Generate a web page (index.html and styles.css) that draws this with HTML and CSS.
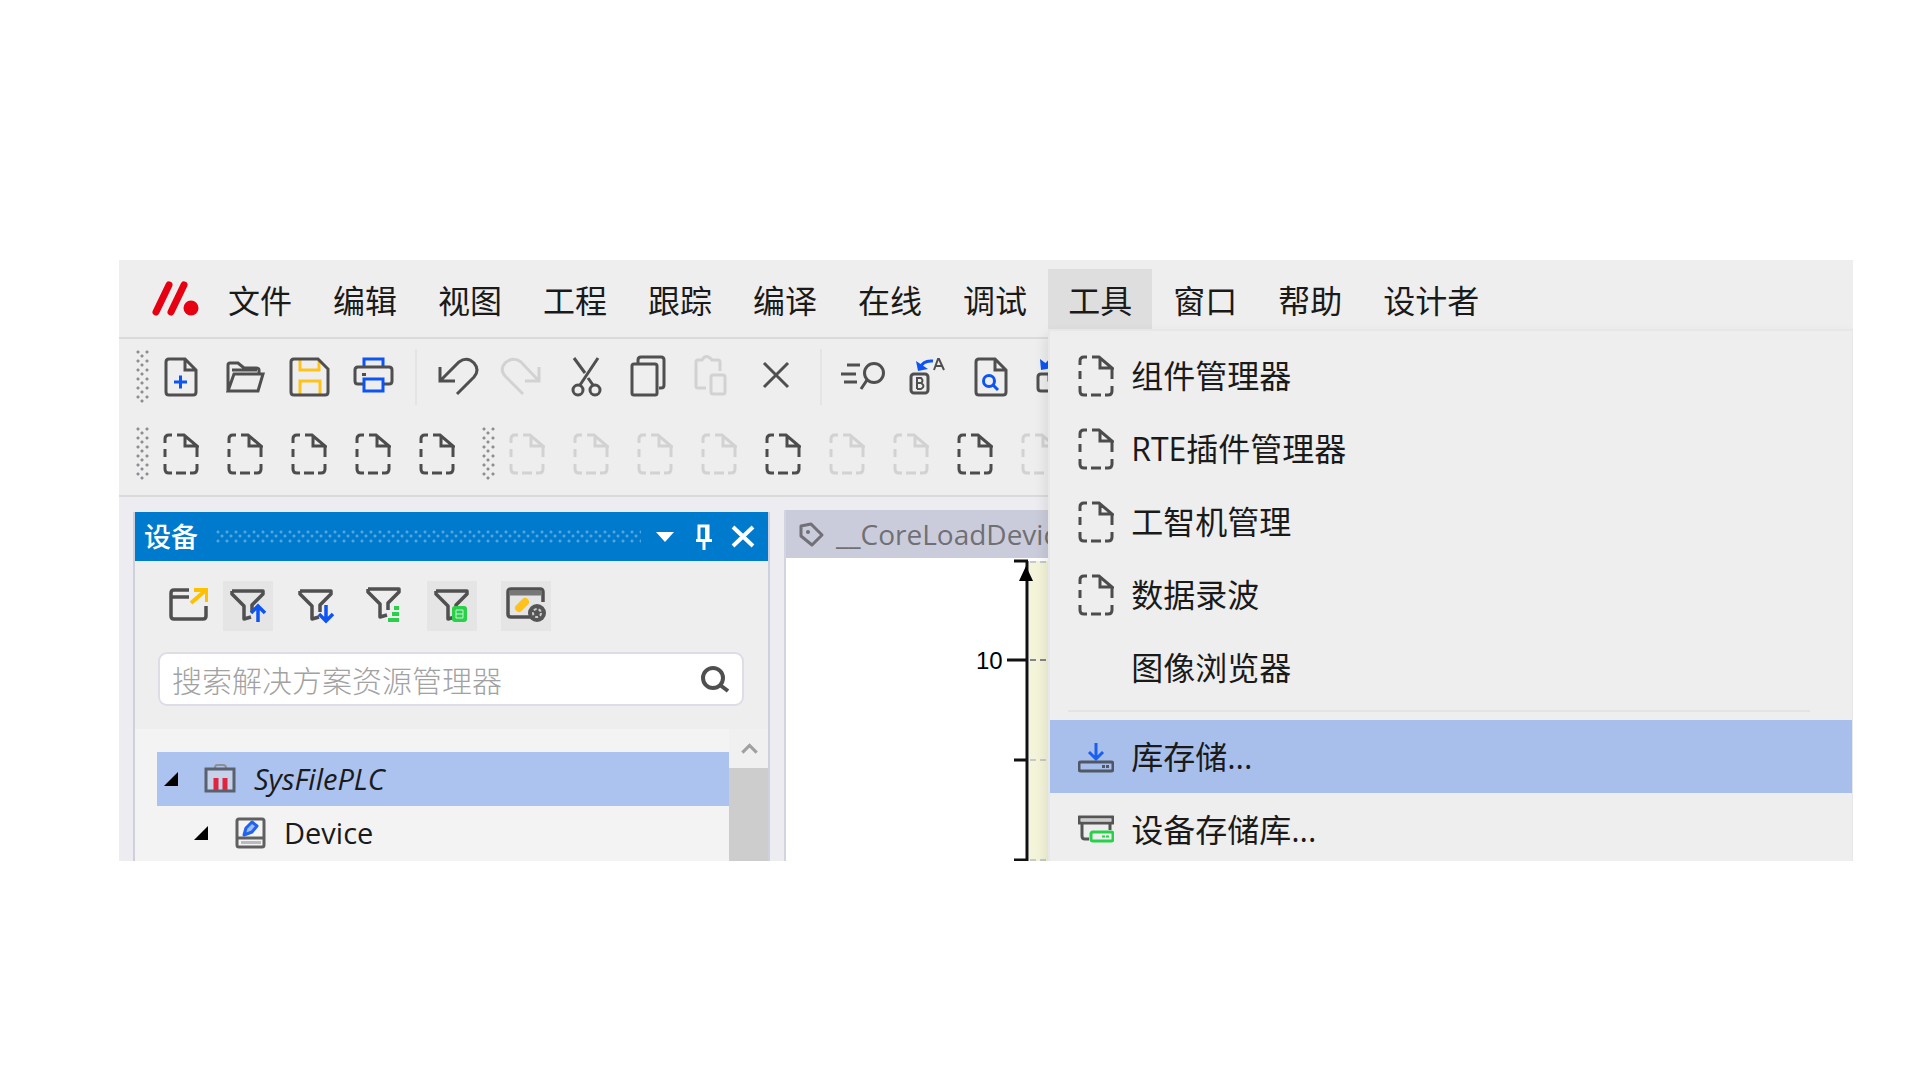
FILE: index.html
```html
<!DOCTYPE html>
<html lang="zh-CN">
<head>
<meta charset="utf-8">
<title>SysFilePLC</title>
<link rel="stylesheet" href="styles.css">
</head>
<body>
<svg class="sprite" aria-hidden="true">
  <symbol id="file" viewBox="0 0 36 42">
    <path d="M2 10V6Q2 2 6 2H9M14 2H21L34 13H22V3M34 14V24M2 16V24M2 31V36Q2 40 6 40H9M13 40H23M27 40H30Q34 40 34 36V31" fill="none" stroke="currentColor" stroke-width="3"/>
  </symbol>
  <symbol id="funnel" viewBox="0 0 50 50">
    <path d="M9 10H40V13L29 24V31M9 10V13L21 25V38L28 36" fill="none" stroke="#505050" stroke-width="3.500" stroke-linejoin="round"/>
  </symbol>
</svg>

<main class="window">
  <nav class="menubar">
    <svg class="logo" viewBox="0 0 60 60" role="img" aria-label="logo"><path d="M8 43 21 16M23 43 36 16" stroke="#e60012" stroke-width="7" stroke-linecap="round"/><circle cx="43" cy="39" r="7.500" fill="#e60012"/></svg>
    <ul class="menus">
      <li><button>文件</button></li>
      <li><button>编辑</button></li>
      <li><button>视图</button></li>
      <li><button>工程</button></li>
      <li><button>跟踪</button></li>
      <li><button>编译</button></li>
      <li><button>在线</button></li>
      <li><button>调试</button></li>
      <li class="open"><button>工具</button>
        <ul class="popup">
          <li><button><svg class="file"><use href="#file"/></svg>组件管理器</button></li>
          <li><button><svg class="file"><use href="#file"/></svg>RTE插件管理器</button></li>
          <li><button><svg class="file"><use href="#file"/></svg>工智机管理</button></li>
          <li><button><svg class="file"><use href="#file"/></svg>数据录波</button></li>
          <li><button><span class="file"></span>图像浏览器</button></li>
          <li class="separator"></li>
          <li class="selected"><button><svg class="file" viewBox="0 0 36 42"><rect x="1" y="26" width="34" height="9" rx="2" fill="none" stroke="#505866" stroke-width="3"/><path d="M24 30.500H31" stroke="#505866" stroke-width="3" stroke-dasharray="3 1"/><path d="M18 7V22M11 16 18 23 25 16" fill="none" stroke="#1a5ff0" stroke-width="3"/></svg>库存储...</button></li>
          <li><button><svg class="file" viewBox="0 0 36 42"><path d="M1 8H35V14H1ZM4 14V27Q4 30 7 30H11M32 14V21" fill="none" stroke="#555" stroke-width="3" stroke-linejoin="round"/><path d="M3 11H33" stroke="#ccc" stroke-width="3"/><rect x="13" y="23" width="22" height="9" rx="2" fill="#eee" stroke="#28d148" stroke-width="3"/><path d="M24 27.500H32" stroke="#28d148" stroke-width="2" stroke-dasharray="3 1"/></svg>设备存储库...</button></li>
        </ul>
      </li>
      <li><button>窗口</button></li>
      <li><button>帮助</button></li>
      <li><button>设计者</button></li>
    </ul>
  </nav>

  <div class="toolbars">
    <div class="toolbar">
      <span class="grip"></span>
      <button aria-label="新建"><svg viewBox="0 0 64 64"><path d="M20 14H36L47 25V47Q47 50 44 50H20Q17 50 17 47V17Q17 14 20 14ZM36 14V25H47" /><path class="blue" d="M25 37H38M31.500 30.500V43.500"/></svg></button>
      <button aria-label="打开"><svg viewBox="0 0 64 64"><path d="M15 46V20Q15 18 17 18H25L31 23H43Q46 23 46 25V29M15 46 21 29H50L45 46ZM19 25H44" stroke-width="3"/></svg></button>
      <button aria-label="保存"><svg viewBox="0 0 64 64"><path class="amber" d="M23 15V25H42V15M23 49V36H43V49"/><path d="M17 14H41L51 24V47Q51 50 48 50H17Q14 50 14 47V17Q14 14 17 14Z"/></svg></button>
      <button aria-label="打印"><svg viewBox="0 0 64 64"><path class="blue" d="M23 22V14H42V22"/><path d="M23 39H17Q14 39 14 36V25Q14 22 17 22H48Q51 22 51 25V36Q51 39 48 39H42M21 29.500H25"/><path class="blue" d="M23 34H42V46H23Z"/></svg></button>
      <span class="rule"></span>
      <button aria-label="撤销"><svg viewBox="0 0 64 64"><path d="M14 22V36H29M15 35 33 17Q41 11 48 18Q54 25 48 32L31 49"/></svg></button>
      <button aria-label="重做" disabled><svg viewBox="0 0 64 64"><path d="M49 22V36H35M48 35 31 17Q23 11 15 18Q9 25 16 32L33 49"/></svg></button>
      <button aria-label="剪切"><svg viewBox="0 0 64 64"><path d="M20 13 31 28M44 13 26 40M34 33 39 40"/><circle cx="24" cy="45" r="5"/><circle cx="41" cy="45" r="5"/></svg></button>
      <button aria-label="复制"><svg viewBox="0 0 64 64"><path d="M16 19H37Q39 19 39 21V48Q39 50 37 50H16Q14 50 14 48V21Q14 19 16 19ZM20 18V15Q20 12 23 12H43Q46 12 46 15V40Q46 43 43 43H41"/></svg></button>
      <button aria-label="粘贴" disabled><svg viewBox="0 0 64 64"><path d="M24 43H16Q14 43 14 41V17Q14 15 16 15H20Q24 8 30 15H36Q38 15 38 17V26M31 30H41Q43 30 43 32V47Q43 49 41 49H31Q29 49 29 47V32Q29 30 31 30Z"/></svg></button>
      <button aria-label="删除"><svg viewBox="0 0 64 64"><path d="M18 18 42 42M42 18 18 42"/></svg></button>
      <span class="rule"></span>
      <button aria-label="查找"><svg viewBox="0 0 64 64"><path d="M16 20H29M10 29H25M13 37H26M36 35 30 44"/><circle cx="43" cy="28" r="9.500"/></svg></button>
      <button aria-label="替换"><svg viewBox="0 0 64 64"><rect x="16" y="29" width="17" height="19" rx="3"/><path d="M22 44V33H26Q29 36 26 38H22M26 38Q31 41 26 44H22" stroke-width="2"/><path class="blue" d="M38 16Q28 15 25 23"/><path class="bluefill" d="M21 16 23 26 33 24Z"/><path d="M39 25 43 14H44L49 25M41 21H47" stroke-width="2"/></svg></button>
      <button aria-label="在文件中查找"><svg viewBox="0 0 64 64"><path d="M20 14H36L47 25V47Q47 50 44 50H20Q17 50 17 47V17Q17 14 20 14ZM36 14V25H47"/><circle class="blue" cx="30" cy="36" r="5.500"/><path class="blue" d="M34 40 39 45"/></svg></button>
      <button aria-label="在文件中替换"><svg viewBox="0 0 64 64"><path d="M28 29H18Q15 29 15 32V43Q15 46 18 46H32M26 29V35H32"/><path class="blue" d="M30 12 22 21"/><path class="bluefill" d="M17 14 18 25 29 23Z"/></svg></button>
    </div>
    <div class="toolbar">
      <span class="grip"></span>
      <button aria-label="命令 1"><svg class="file"><use href="#file"/></svg></button>
      <button aria-label="命令 2"><svg class="file"><use href="#file"/></svg></button>
      <button aria-label="命令 3"><svg class="file"><use href="#file"/></svg></button>
      <button aria-label="命令 4"><svg class="file"><use href="#file"/></svg></button>
      <button aria-label="命令 5"><svg class="file"><use href="#file"/></svg></button>
      <span class="grip next"></span>
      <button aria-label="命令 6" disabled><svg class="file"><use href="#file"/></svg></button>
      <button aria-label="命令 7" disabled><svg class="file"><use href="#file"/></svg></button>
      <button aria-label="命令 8" disabled><svg class="file"><use href="#file"/></svg></button>
      <button aria-label="命令 9" disabled><svg class="file"><use href="#file"/></svg></button>
      <button aria-label="命令 10"><svg class="file"><use href="#file"/></svg></button>
      <button aria-label="命令 11" disabled><svg class="file"><use href="#file"/></svg></button>
      <button aria-label="命令 12" disabled><svg class="file"><use href="#file"/></svg></button>
      <button aria-label="命令 13"><svg class="file"><use href="#file"/></svg></button>
      <button aria-label="命令 14" disabled><svg class="file"><use href="#file"/></svg></button>
    </div>
  </div>

  <div class="workspace">
    <section class="panel">
      <header class="caption">
        <h2>设备</h2>
        <span class="dots"></span>
        <button aria-label="菜单"><svg viewBox="0 0 30 30"><path d="M6 10H24L15 20Z" fill="#fff"/></svg></button>
        <button aria-label="固定"><svg viewBox="0 0 30 30"><path d="M10 18V4H19V18M7 18.500H23M15 19V28" fill="none" stroke="#fff" stroke-width="3"/><path d="M18 3V18" stroke="#fff" stroke-width="4"/></svg></button>
        <button aria-label="关闭"><svg viewBox="0 0 30 30"><path d="M5 5 25 24M25 5 5 24" stroke="#fff" stroke-width="4"/></svg></button>
      </header>
      <div class="filters">
        <button class="first" aria-label="弹出"><svg viewBox="0 0 50 50"><path d="M24 9H9Q6 9 6 12V35Q6 38 9 38H38Q41 38 41 35V25M6 16H24" fill="none" stroke="#505050" stroke-width="3.500"/><path d="M26 22 41 9M29 9H42V21" fill="none" stroke="#ffc000" stroke-width="4"/></svg></button>
        <button class="on" aria-label="向上筛选"><svg viewBox="0 0 50 50"><use href="#funnel"/><path d="M35 41V26M28 32 35 25 42 32" fill="none" stroke="#0d55f2" stroke-width="3.500"/></svg></button>
        <button aria-label="向下筛选"><svg viewBox="0 0 50 50"><use href="#funnel"/><path d="M35 24V39M28 33 35 40 42 33" fill="none" stroke="#0d55f2" stroke-width="3.500"/></svg></button>
        <button aria-label="列表筛选"><svg viewBox="0 0 50 50"><use href="#funnel" y="-2"/><path d="M35 27H40M33 33H40M29 39H40" stroke="#28d148" stroke-width="4"/></svg></button>
        <button class="on" aria-label="设备筛选"><svg viewBox="0 0 50 50"><use href="#funnel"/><rect x="25" y="25" width="15" height="16" rx="3" fill="#28d148"/><path d="M29 29H36V37H29ZM29 33H36" fill="none" stroke="#c8f5d0" stroke-width="1"/></svg></button>
        <button class="on last" aria-label="视图设置"><svg viewBox="0 0 50 50"><path d="M31 36H10Q7 36 7 33V11Q7 8 10 8H39Q42 8 42 11V21" fill="none" stroke="#505050" stroke-width="3.500"/><path d="M8 12H41" stroke="#777" stroke-width="5"/><path d="M18 27 24 21" stroke="#ffc21a" stroke-width="8" stroke-linecap="round"/><circle cx="36" cy="32" r="9" fill="#555"/><circle cx="36" cy="32" r="4" fill="none" stroke="#ccc" stroke-width="2" stroke-dasharray="3 2"/></svg></button>
      </div>
      <label class="search">
        <input type="text" placeholder="搜索解决方案资源管理器" aria-label="搜索解决方案资源管理器">
        <svg viewBox="0 0 30 30"><circle cx="13" cy="14" r="10"/><path d="M20 21 28 27"/></svg>
      </label>
      <div class="tree">
        <ul>
          <li class="selected"><svg class="twist" viewBox="0 0 14 14"><path d="M14 0V14H0Z"/></svg><svg class="node" viewBox="0 0 32 32"><path d="M11 5Q11 2 13 2H19Q22 2 22 5" fill="none" stroke="#8f8f96" stroke-width="2"/><rect x="2" y="6" width="28" height="22" fill="#c6d1ea" stroke="#59616f" stroke-width="3"/><path d="M12 15V27M21 15V27" stroke="#e0243c" stroke-width="5"/></svg><em>SysFilePLC</em></li>
          <li class="child"><svg class="twist" viewBox="0 0 14 14"><path d="M14 0V14H0Z"/></svg><svg class="node" viewBox="0 0 32 32"><rect x="3" y="2" width="27" height="28" rx="2" fill="#f4f4f4" stroke="#606060" stroke-width="3"/><path d="M3 21H30" stroke="#606060" stroke-width="3"/><path d="M7 25.500H27" stroke="#bbb" stroke-width="3"/><path d="M10 18 12 11 18 5 23 9 18 15Z" fill="#9fbcf8" stroke="#1f63ef" stroke-width="3" stroke-linejoin="round"/></svg><span>Device</span></li>
        </ul>
        <div class="scrollbar"><svg viewBox="0 0 38 38"><path d="M13 23 20 16 27 23" fill="none" stroke="#a0a0a0" stroke-width="3"/></svg><span class="thumb"></span></div>
      </div>
    </section>

    <section class="editor">
      <header class="tab"><svg viewBox="0 0 30 30"><path d="M5 7 15 5 26 16 16 26 5 17Z" fill="none" stroke="#707076" stroke-width="3" stroke-linejoin="round"/><circle cx="12" cy="13" r="2" fill="#707076"/></svg><span>__CoreLoadDevice</span></header>
      <div class="canvas">
        <svg viewBox="0 0 300 303" width="300" height="303" class="trace">
          <path d="M243 3H300V303H243Z" fill="#f4f4da"/>
          <path d="M244 4H300M244 202H300M244 302H300" stroke="#c9c9c9" stroke-width="2" stroke-dasharray="6 4"/>
          <path d="M244 102H300" stroke="#858585" stroke-width="2" stroke-dasharray="6 4"/>
          <path d="M241 3V303" stroke="#111" stroke-width="3"/>
          <path d="M228 3H242M221 102H241M228 202H241M228 302H242" stroke="#111" stroke-width="3"/>
          <path d="M240 8 247 23H233Z"/>
          <text x="190" y="111">10</text>
        </svg>
      </div>
    </section>
  </div>
</main>
</body>
</html>
```
FILE: styles.css
```css
* { box-sizing: border-box; }
body {
  margin: 0;
  padding: 260px 67px 0 119px;
  background: #fff;
  color: #1a1a1a;
  font-family: "Open Sans", "Noto Sans CJK SC", sans-serif;
}
ul { margin: 0; padding: 0; list-style: none; }
button {
  padding: 0;
  border: 0;
  background: none;
  color: inherit;
  font: inherit;
}
.sprite { position: absolute; width: 0; height: 0; }
.file { width: 36px; height: 42px; flex: none; color: #4c4c4c; }

.window { background: #eee; overflow: hidden; }

/* menu bar */
.menubar {
  display: flex;
  padding: 9px 0 8px 29px;
  border-bottom: 2px solid #dadada;
  font-family: "Noto Sans CJK SC", sans-serif;
  font-size: 32px;
  line-height: 60px;
}
.logo { width: 60px; height: 60px; flex: none; }
.menus { display: flex; gap: 1px; }
.menus > li > button { height: 60px; padding: 0 20px; white-space: nowrap; }
.open { position: relative; }
.open > button { background: #dedede; }
.popup {
  position: absolute;
  z-index: 2;
  top: 60px;
  left: 0;
  width: 806px;
  padding-top: 8px;
  border: 2px solid #e7e7e7;
  background: #eee;
  box-shadow: -2px 6px 12px rgba(0, 0, 0, 0.1);
  font-family: "Open Sans", "Noto Sans CJK SC", sans-serif;
}
.popup button {
  display: flex;
  align-items: center;
  gap: 17px;
  width: 100%;
  height: 73px;
  padding-left: 28px;
}
.popup .separator { height: 2px; margin: 6px 42px 8px 18px; background: #e3e3e3; }
.popup .selected { background: #a8bfeb; }

/* tool bars */
.toolbars { padding-bottom: 3px; border-bottom: 2px solid #dadada; }
.toolbar { display: flex; align-items: center; height: 76px; padding-left: 17px; }
.toolbar button {
  display: flex;
  flex: none;
  align-items: center;
  justify-content: center;
  width: 64px;
  height: 64px;
}
.toolbar + .toolbar { height: 77px; }
.toolbar button > svg:not(.file) {
  width: 64px;
  height: 64px;
  fill: none;
  stroke: #4f4f4f;
  stroke-width: 3px;
}
.toolbar svg .blue { stroke: #0d55f2; }
.toolbar svg .bluefill { fill: #0d55f2; stroke: none; }
.toolbar svg .amber { stroke: #ffc21a; }
.toolbar button:disabled > svg:not(.file) { stroke: #d2d2d2; }
.toolbar button:disabled .file { color: #d2d2d2; }
.grip, .dots {
  --dot: #8d8d92;
  width: 13px;
  height: 54px;
  flex: none;
  background-image:
    radial-gradient(circle at 2px 2px, var(--dot) 1px, transparent 2px),
    radial-gradient(circle at 6px 6px, var(--dot) 1px, transparent 2px);
  background-size: 9px 9px;
}
.next { margin-left: 13px; }
.rule { width: 2px; height: 56px; margin: 0 9px 0 10px; background: #e4e4e6; flex: none; }

/* work area */
.workspace {
  display: flex;
  align-items: stretch;
  gap: 14px;
  padding: 13px 0 0 14px;
  background: #edecf1;
}
.panel {
  display: flex;
  flex-direction: column;
  width: 637px;
  flex: none;
  margin-top: 2px;
  border: 0 solid #cfd0de;
  border-width: 0 2px;
  background: #eee;
}
.caption {
  display: flex;
  align-items: center;
  height: 49px;
  padding: 0 10px 0 9px;
  background: #007acd;
  color: #fff;
}
.caption h2 { margin: 0 18px 0 0; font-size: 27px; font-weight: 500; line-height: 48px; }
.dots { --dot: #4fa5df; flex: 1; height: 13px; }
.caption button { width: 30px; height: 30px; margin-left: 9px; }
.caption svg { display: block; }
.filters { display: flex; gap: 18px; padding: 20px 29px 21px 30px; }
.filters button { width: 50px; height: 50px; }
.filters .first { width: 40px; overflow: hidden; }
.filters .first svg { width: 50px; }
.filters .on { background: #e5e5e5; }
.filters .last { margin-left: 6px; }
.filters svg { display: block; width: 50px; height: 50px; }
.filters .first { width: 43px; margin-right: -3px; }
.search {
  display: flex;
  align-items: center;
  height: 54px;
  margin: 0 24px 23px 23px;
  padding: 0 12px;
  border: 2px solid #dcdde7;
  border-radius: 9px;
  background: #fff;
}
.search input {
  flex: 1;
  min-width: 0;
  padding: 0;
  border: 0;
  outline: 0;
  background: none;
  font: 300 30px/44px "Noto Sans CJK SC", sans-serif;
}
.search input::placeholder { color: #a2a2a2; }
.search svg { width: 30px; height: 30px; fill: none; stroke: #4f4f4f; stroke-width: 4px; }
.tree { display: flex; flex: 1; background: #f3f3f3; font-size: 29px; line-height: 54px; }
.tree ul { flex: 1; padding: 23px 0 0 22px; }
.tree li { display: flex; align-items: center; height: 54px; padding-left: 7px; }
.tree li.child { padding-left: 37px; }
.tree .selected { background: #acc2ef; }
.twist { width: 14px; height: 14px; margin-right: 26px; }
.node { width: 32px; height: 32px; margin-right: 18px; }
.scrollbar { display: flex; flex-direction: column; width: 39px; background: #f0f0f0; }
.scrollbar svg { width: 39px; height: 39px; }
.thumb { flex: 1; background: #cdcdcd; }

.editor { flex: 1; min-width: 0; border-left: 2px solid #d3d4e2; }
.tab {
  display: flex;
  align-items: center;
  gap: 10px;
  height: 48px;
  padding-left: 10px;
  background: #cbccdb;
  color: #707074;
  font-size: 28px;
  line-height: 48px;
}
.tab svg { width: 30px; height: 30px; }
.canvas { background: #fff; }
.trace { display: block; font: 24px "Liberation Sans", sans-serif; }
```
